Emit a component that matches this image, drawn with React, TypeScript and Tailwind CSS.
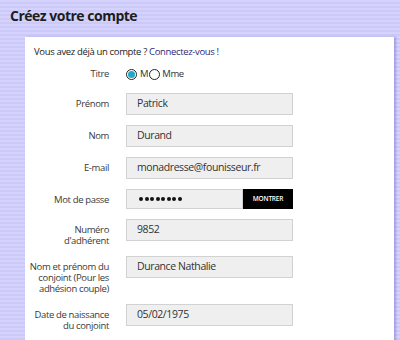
import React from "react";

const font = "font-['Open_Sans','Noto_Sans',sans-serif]";

const Row = ({ label, children }: { label: React.ReactNode; children: React.ReactNode }) => (
  <div className="flex items-start">
    <div className="w-[84px] shrink-0 whitespace-nowrap pt-[5px] text-right text-[9.5px] leading-[11px] tracking-[-0.35px] text-[#3a3a3a]">
      {label}
    </div>
    <div className="ml-[17px]">{children}</div>
  </div>
);

const Field = ({ value }: { value: string }) => (
  <div className="flex h-[22px] w-[167px] items-center border border-[#d2d2d2] bg-[#efefef] pl-[10px] text-[10.5px] tracking-[-0.4px] text-[#333]">
    {value}
  </div>
);

export default function App() {
  return (
    <div
      className={`${font} h-[340px] w-[400px] overflow-hidden bg-[repeating-linear-gradient(to_bottom,#d5d3fd_0px,#d5d3fd_2px,#cbc9f8_2px,#cbc9f8_4px)]`}
    >
      <h1 className="pl-[10px] pt-[6px] text-[14px] font-bold leading-[20px] tracking-[-0.5px] text-[#1d1d1d]">
        Créez votre compte
      </h1>
      <div className="ml-[25px] mt-[11px] h-[320px] w-[369px] bg-white shadow-[2px_0_2px_rgba(120,110,200,0.5)]">
        <p className="pl-[9px] pt-[9px] text-[9.5px] leading-[12px] tracking-[-0.35px] text-[#222]">
          Vous avez déjà un compte ? <span className="text-[#2b2a7e]">Connectez-vous !</span>
        </p>
        <div className="mt-[10px] flex h-[12px] items-center">
          <div className="w-[84px] text-right text-[9.5px] tracking-[-0.35px] text-[#3a3a3a]">Titre</div>
          <div className="ml-[17px] flex items-center text-[9.5px] tracking-[-0.35px] text-[#333]">
            <span className="flex h-[11px] w-[11px] items-center justify-center rounded-full border border-[#222] bg-white">
              <span className="h-[7px] w-[7px] rounded-full bg-[#21aac8]" />
            </span>
            <span className="ml-[3px]">M</span>
            <span className="ml-[1px] h-[11px] w-[11px] rounded-full border border-[#222] bg-white" />
            <span className="ml-[2px]">Mme</span>
          </div>
        </div>
        <div className="mt-[13px] flex flex-col gap-[10px]">
          <Row label="Prénom">
            <Field value="Patrick" />
          </Row>
          <Row label="Nom">
            <Field value="Durand" />
          </Row>
          <Row label="E-mail">
            <Field value="monadresse@founisseur.fr" />
          </Row>
          <Row label="Mot de passe">
            <div className="flex items-center">
              <div className="flex h-[20px] w-[117px] items-center gap-[1.5px] border border-[#d2d2d2] bg-[#efefef] pl-[12px]">
                {Array.from({ length: 8 }).map((_, i) => (
                  <span key={i} className="h-[4px] w-[4px] rounded-full bg-[#111]" />
                ))}
              </div>
              <button className="flex h-[20px] w-[50px] items-center justify-center bg-black text-[6.5px] font-semibold tracking-[-0.2px] text-white">
                MONTRER
              </button>
            </div>
          </Row>
          <Row label={<>Numéro<br />d'adhérent</>}>
            <Field value="9852" />
          </Row>
          <Row label={<>Nom et prénom du<br />conjoint (Pour les<br />adhésion couple)</>}>
            <Field value="Durance Nathalie" />
          </Row>
          <Row label={<>Date de naissance<br />du conjoint</>}>
            <Field value="05/02/1975" />
          </Row>
        </div>
      </div>
    </div>
  );
}
